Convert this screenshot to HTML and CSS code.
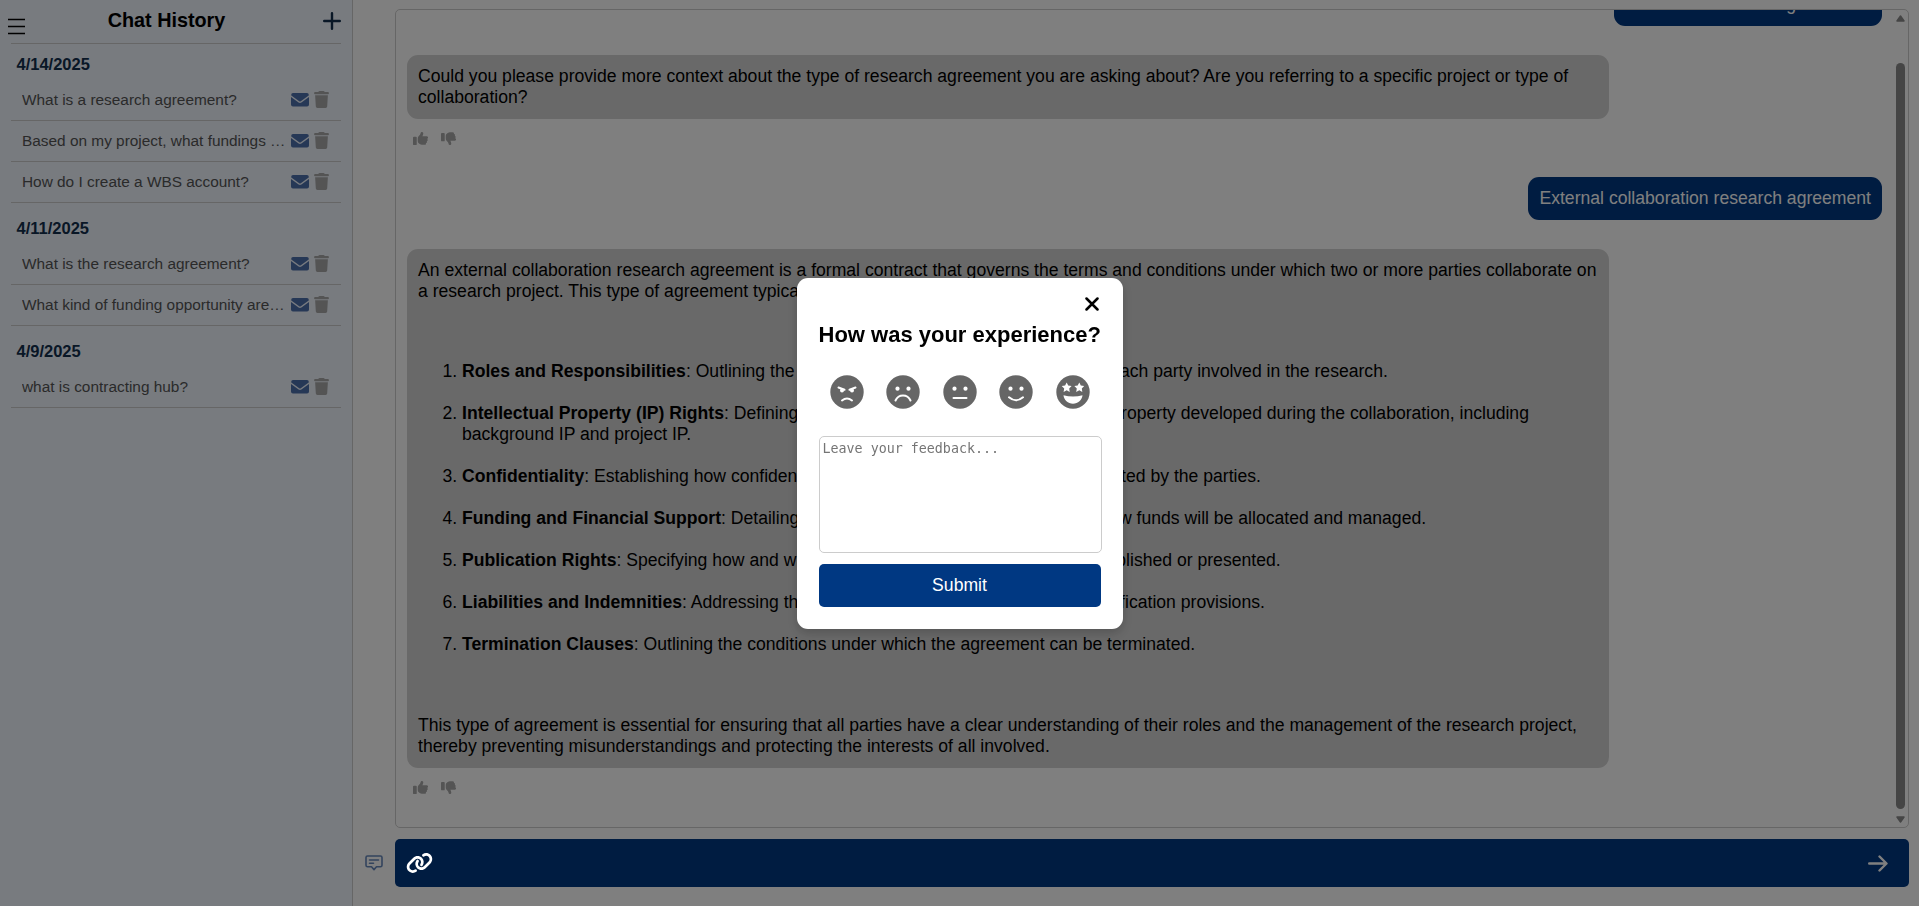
FILE: index.html
```html
<!DOCTYPE html>
<html lang="en">
<head>
<meta charset="utf-8">
<title>Chat</title>
<link rel="stylesheet" href="styles.css">
</head>
<body>
<svg class="defs" aria-hidden="true">
  <symbol id="mail" viewBox="0 0 18 14"><path d="M2 0h14a2 2 0 0 1 1.700 2.400L9.800 8.200a1.500 1.500 0 0 1-1.600 0L.3 2.400A2 2 0 0 1 2 0zM0 4l7.600 5.500a2.500 2.500 0 0 0 2.800 0L18 4v7.500a2 2 0 0 1-2 2H2a2 2 0 0 1-2-2z"/></symbol>
  <symbol id="trash" viewBox="0 0 448 512"><path d="M135 18 128 32H32a32 32 0 0 0 0 64h384a32 32 0 0 0 0-64h-96l-7-14A32 32 0 0 0 284 0H164a32 32 0 0 0-29 18zM32 128l21 339a48 48 0 0 0 48 45h246a48 48 0 0 0 48-45l21-339z"/></symbol>
  <symbol id="up" viewBox="0 0 512 512"><path d="M313 33c26 5 43 30 37 56l-2 11c-5 27-15 53-29 76h145a48 48 0 0 1 20 92 48 48 0 0 1-13 81 48 48 0 0 1-30 66 48 48 0 0 1-47 57h-97a96 96 0 0 1-53-16l-39-26a96 96 0 0 1-43-80V247c0-29 13-57 36-75l7-6c27-21 45-51 52-84l2-11c5-26 30-43 56-38zM32 192h64a32 32 0 0 1 32 32v224a32 32 0 0 1-32 32H32a32 32 0 0 1-32-32V224a32 32 0 0 1 32-32z"/></symbol>
  <symbol id="down" viewBox="0 0 512 512"><path d="M313 479c26-5 43-30 37-56l-2-11c-5-27-15-53-29-76h145a48 48 0 0 0 20-92 48 48 0 0 0-13-81 48 48 0 0 0-30-66 48 48 0 0 0-47-57h-97a96 96 0 0 0-53 16l-39 26a96 96 0 0 0-43 80v103c0 29 13 57 36 75l7 6c27 21 45 51 52 84l2 11c5 26 30 43 56 38zM32 352h64a32 32 0 0 0 32-32V96a32 32 0 0 0-32-32H32A32 32 0 0 0 0 96v224a32 32 0 0 0 32 32z"/></symbol>
</svg>
<div class="app">
  <aside class="sidebar">
    <header class="side-head">
      <svg class="burger" viewBox="0 0 17 17"><path d="M0 1.500h17M0 8.500h17M0 15.500h17" stroke="#000" stroke-width="1.700"/></svg>
      <h2>Chat History</h2>
      <svg class="plus" viewBox="0 0 18 18"><path d="M9 1.200v15.600M1.200 9h15.600" stroke="currentColor" stroke-width="2.400" stroke-linecap="round"/></svg>
    </header>
    <section class="day">
      <h3 class="date">4/14/2025</h3>
      <div class="chat"><span>What is a research agreement?</span><svg class="mail"><use href="#mail"/></svg><svg class="trash"><use href="#trash"/></svg></div>
      <div class="chat"><span>Based on my project, what fundings are available?</span><svg class="mail"><use href="#mail"/></svg><svg class="trash"><use href="#trash"/></svg></div>
      <div class="chat"><span>How do I create a WBS account?</span><svg class="mail"><use href="#mail"/></svg><svg class="trash"><use href="#trash"/></svg></div>
    </section>
    <section class="day">
      <h3 class="date">4/11/2025</h3>
      <div class="chat"><span>What is the research agreement?</span><svg class="mail"><use href="#mail"/></svg><svg class="trash"><use href="#trash"/></svg></div>
      <div class="chat"><span>What kind of funding opportunity areas are there?</span><svg class="mail"><use href="#mail"/></svg><svg class="trash"><use href="#trash"/></svg></div>
    </section>
    <section class="day">
      <h3 class="date">4/9/2025</h3>
      <div class="chat"><span>what is contracting hub?</span><svg class="mail"><use href="#mail"/></svg><svg class="trash"><use href="#trash"/></svg></div>
    </section>
  </aside>
  <main class="main">
    <section class="messages">
      <div class="thread">
        <div class="bubble user first">What is a research agreement?</div>
        <div class="bubble bot">Could you please provide more context about the type of research agreement you are asking about? Are you referring to a specific project or type of collaboration?</div>
        <div class="votes"><svg><use href="#up"/></svg><svg><use href="#down"/></svg></div>
        <div class="bubble user">External collaboration research agreement</div>
        <div class="bubble bot">
          <p>An external collaboration research agreement is a formal contract that governs the terms and conditions under which two or more parties collaborate on a research project. This type of agreement typically includes the following:</p>
          <ol>
            <li><b>Roles and Responsibilities</b>: Outlining the specific roles, duties and contributions of <span class="t1">each party involved in the research.</span></li>
            <li><b>Intellectual Property (IP) Rights</b>: Defining the ownership and usage of intellectual <span class="t2">property developed during the collaboration, including</span><br>background IP and project IP.</li>
            <li><b>Confidentiality</b>: Establishing how confidential information will be handled and protected by the parties.</li>
            <li><b>Funding and Financial Support</b>: Detailing the financial contributions of each and <span class="t4">how funds will be allocated and managed.</span></li>
            <li><b>Publication Rights</b>: Specifying how and when the joint research findings can be <span class="t5">published or presented.</span></li>
            <li><b>Liabilities and Indemnities</b>: Addressing the liabilities of the parties and any indemnification provisions.</li>
            <li><b>Termination Clauses</b>: Outlining the conditions under which the agreement can be terminated.</li>
          </ol>
          <p>This type of agreement is essential for ensuring that all parties have a clear understanding of their roles and the management of the research project, thereby preventing misunderstandings and protecting the interests of all involved.</p>
        </div>
        <div class="votes"><svg><use href="#up"/></svg><svg><use href="#down"/></svg></div>
      </div>
      <div class="scroll">
        <svg class="arrow" viewBox="0 0 9 7"><path d="M4.500 1 8 6H1z" fill="currentColor" stroke="currentColor" stroke-width="1.500" stroke-linejoin="round"/></svg>
        <div class="thumb"></div>
        <svg class="arrow" viewBox="0 0 9 7"><path d="M4.500 6 8 1H1z" fill="currentColor" stroke="currentColor" stroke-width="1.500" stroke-linejoin="round"/></svg>
      </div>
    </section>
    <footer class="compose">
      <svg class="note" viewBox="0 0 18 16" fill="none" stroke="currentColor" stroke-width="1.600" stroke-linejoin="round" stroke-linecap="round"><path d="M2.500 1h13A1.500 1.500 0 0 1 17 2.500v7.800a1.500 1.500 0 0 1-1.500 1.500h-4L9 14.600l-2.500-2.800h-4A1.500 1.500 0 0 1 1 10.300V2.500A1.500 1.500 0 0 1 2.500 1zM4.500 5h9M4.500 8.300h4"/></svg>
      <div class="bar">
        <svg class="send" viewBox="0 0 20 17" fill="none" stroke="#fff" stroke-width="2.400" stroke-linecap="round" stroke-linejoin="round"><path d="M1.200 8.500h17M11.500 1.500l7 7-7 7"/></svg>
      </div>
    </footer>
  </main>
</div>
<div class="overlay">
  <svg class="link-top" viewBox="0 0 640 512"><path fill="#fff" d="M580 268c56-57 56-148 0-205-50-50-129-57-187-15l-1 1a32 32 0 0 0 37 52l2-1c32-23 76-20 104 8 32 32 32 83 0 114L422 334c-31 32-82 32-114 0-28-28-31-72-8-104l1-1a32 32 0 0 0-52-38l-1 2c-42 57-35 137 15 187 56 56 148 56 204 0zM60 244c-56 56-56 148 0 204 50 50 129 57 187 15l1-1a32 32 0 0 0-37-52l-2 1c-32 23-76 20-104-8-32-32-32-83 0-114L218 177c31-31 82-31 114 0 28 28 31 72 8 104l-1 2a32 32 0 0 0 52 37l1-1c42-58 35-137-15-187-56-57-148-57-204-1z"/></svg>
  <div class="modal">
    <svg class="close" viewBox="0 0 14 14"><path d="M1.500 1.500l11 11M12.500 1.500l-11 11" stroke="#000" stroke-width="2.500" stroke-linecap="round"/></svg>
    <h2>How was your experience?</h2>
    <div class="faces">
      <svg viewBox="0 0 34 34"><circle cx="17" cy="17" r="16.700"/><path class="l" d="M8.500 12.500l6 2.300M25.500 12.500l-6 2.300M12 25.500q5-4 10 0"/><circle class="w" cx="12" cy="15.500" r="2"/><circle class="w" cx="22" cy="15.500" r="2"/></svg>
      <svg viewBox="0 0 34 34"><circle cx="17" cy="17" r="16.700"/><path class="l" d="M9.500 25.500c3-6.700 12-6.700 15 0"/><circle class="w" cx="11.500" cy="13.700" r="2.100"/><circle class="w" cx="22.500" cy="13.700" r="2.100"/></svg>
      <svg viewBox="0 0 34 34"><circle cx="17" cy="17" r="16.700"/><path class="l" d="M10.500 23h13"/><circle class="w" cx="11.500" cy="13.700" r="2.100"/><circle class="w" cx="22.500" cy="13.700" r="2.100"/></svg>
      <svg viewBox="0 0 34 34"><circle cx="17" cy="17" r="16.700"/><path class="l" d="M10 22.300q7 6 14 0"/><circle class="w" cx="11.500" cy="13.700" r="2.100"/><circle class="w" cx="22.500" cy="13.700" r="2.100"/></svg>
      <svg viewBox="0 0 34 34"><circle cx="17" cy="17" r="16.700"/><path class="w" d="M7.500 20.300c6 1.700 13 1.700 19 0-.4 4.500-4.500 8.500-9.500 8.500s-9.100-4-9.500-8.500z"/><path class="w" d="M10.700 7.500l1.500 3.100 3.400.5-2.400 2.400.5 3.500-3-1.700-3.100 1.700.6-3.500-2.500-2.400 3.400-.5z"/><path class="w" d="M23.300 7.500l1.500 3.100 3.400.5-2.400 2.400.5 3.500-3-1.700-3.100 1.700.6-3.500-2.500-2.400 3.400-.5z"/></svg>
    </div>
    <textarea placeholder="Leave your feedback..."></textarea>
    <button>Submit</button>
  </div>
</div>
</body>
</html>
```
FILE: styles.css
```css
* { box-sizing: border-box; }
body { margin: 0; font-family: "Liberation Sans", Arial, sans-serif; overflow: hidden; background: #fff; }
h2, h3, p, ol { margin: 0; }
.defs { display: none; }
.app { display: flex; height: 906px; }

.sidebar { width: 353px; padding: 0 11px; background: #f0f6ff; border-right: 1px solid #ccc; }
.side-head { display: flex; justify-content: space-between; height: 44px; border-bottom: 1px solid #ccc; }
.side-head h2 { margin-right: 15px; font-size: 19.8px; line-height: 40px; }
.burger { width: 17px; height: 17px; margin: 18px 0 0 -3px; }
.plus { width: 18px; height: 18px; margin-top: 12px; color: #122f4d; }
.day { margin-bottom: 5px; }
.date { font-size: 16.5px; line-height: 21px; height: 36px; padding: 10px 6px 0 5.500px; color: #122f4d; }
.chat { display: flex; align-items: center; height: 41px; padding: 0 11px 1px; border-bottom: 1px solid #ccc; color: #555; font-size: 15.4px; }
.chat span { flex: none; width: 265px; overflow: hidden; text-overflow: ellipsis; white-space: nowrap; }
.mail { flex: none; width: 18px; height: 14px; margin-left: 4px; fill: #4c70ac; }
.trash { flex: none; width: 15px; height: 17px; margin-left: 5px; fill: #a9a9a9; }

.main { flex: 1; padding: 9px 10px 19px 12px; display: flex; flex-direction: column; }
.messages { display: flex; height: 819px; margin-left: 30px; border: 1px solid #ccc; border-radius: 5px; overflow: hidden; }
.thread { flex: 1; display: flex; flex-direction: column; padding: 0 11px; font-size: 17.6px; line-height: 21px; }
.bubble { flex: none; padding: 11px; border-radius: 11px; }
.user { align-self: flex-end; background: #003882; color: #fff; }
.first { margin: -27px 0 29px; width: 268px; }
.bot { width: 1202px; background: #d3d3d3; }
.votes { display: flex; gap: 13px; height: 58px; padding: 12px 6px 0; }
.votes svg { width: 15px; height: 15px; fill: #a9a9a9; }
.votes + .user { margin-bottom: 29px; }
.bot ol { padding: 59px 0 60px 44px; }
.bot li { margin-bottom: 21px; }
.bot li:last-child { margin-bottom: 0; }
.t1 { margin-left: -11px; }
.t2 { margin-left: -1px; }
.t4 { margin-left: -5px; }
.t5 { margin-left: 3px; }
.scroll { width: 15px; padding: 5px 3px 4px; display: flex; flex-direction: column; color: #8b8b8b; }
.arrow { width: 9px; height: 7px; }
.thumb { flex: 1; margin: 41px 0 7px; border-radius: 5px; background: #8b8b8b; }

.compose { display: flex; align-items: center; margin-top: 11px; }
.note { width: 18px; height: 16px; color: #6688bb; }
.bar { flex: 1; display: flex; align-items: center; justify-content: flex-end; height: 48px; margin-left: 12px; padding: 0 21px 0 11px; border-radius: 5px; background: #003882; }
.send { width: 20px; height: 17px; }

.overlay { position: fixed; inset: 0; display: flex; align-items: center; justify-content: center; background: rgba(0, 0, 0, .5); }
.link-top { position: absolute; left: 406px; top: 852px; width: 27px; height: 22px; }
.modal { width: 326px; height: 351px; padding: 19px 22px 22px; border-radius: 11px; background: #fff; box-shadow: 0 4px 11px rgba(0, 0, 0, .2); display: flex; flex-direction: column; }
.close { width: 14px; height: 14px; align-self: flex-end; margin-right: 2px; }
.modal h2 { margin-top: 11px; font-size: 22px; line-height: 26px; white-space: nowrap; }
.faces { display: flex; justify-content: space-between; margin: 27px 11px 27px; }
.faces svg { width: 34px; height: 34px; fill: #666; }
.faces .w { fill: #fff; }
.faces .l { fill: none; stroke: #fff; stroke-width: 2; stroke-linecap: round; }
textarea { width: 283px; height: 117px; padding: 4px 3px; border: 1px solid #ccc; border-radius: 5px; resize: none; font: 13.333px "DejaVu Sans Mono", monospace; outline: none; }
textarea::placeholder { color: #757575; }
button { height: 43px; margin-top: 11px; border: 0; border-radius: 5px; background: #003882; color: #fff; font: 17.6px "Liberation Sans", Arial, sans-serif; }
```
